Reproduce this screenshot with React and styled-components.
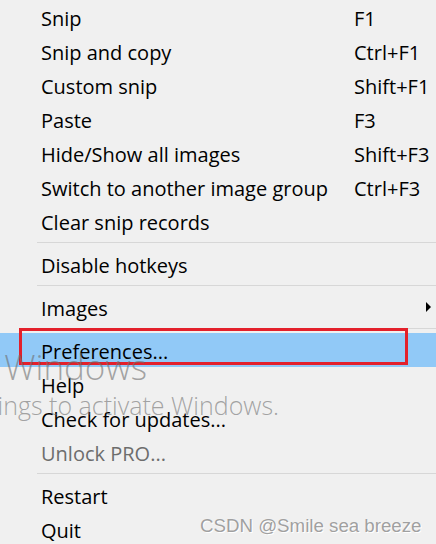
import React from "react";
import styled, { createGlobalStyle } from "styled-components";

const GlobalStyle = createGlobalStyle`
  html, body {
    margin: 0;
    padding: 0;
    background: #f0f0f0;
    overflow: hidden;
  }
`;

const Menu = styled.div`
  position: relative;
  width: 436px;
  height: 544px;
  overflow: hidden;
  background: #f0f0f0;
  font-family: "Open Sans", "Noto Sans", sans-serif;
  font-size: 20px;
  color: #000;
`;

const Item = styled.div`
  display: flex;
  align-items: center;
  height: 34px;
  padding: 2px 0 0 41px;
  box-sizing: border-box;
  background: ${(p) => (p.$active ? "#91c9f7" : "transparent")};
  color: ${(p) => (p.$disabled ? "#6d6d6d" : "#000")};
  white-space: nowrap;
`;

const Label = styled.span`
  width: 313px;
  flex: none;
`;

const Shortcut = styled.span`
  flex: 1;
`;

const SubArrow = styled.span`
  margin: -2px 5px 0 auto;
  width: 0;
  height: 0;
  border-top: 5px solid transparent;
  border-bottom: 5px solid transparent;
  border-left: 5px solid #000;
`;

const Separator = styled.div`
  height: 1px;
  margin: 4px 0 4px 37px;
  background: #d7d7d7;
`;

const Callout = styled.div`
  position: absolute;
  left: 19px;
  top: 328px;
  width: 389px;
  height: 37px;
  box-sizing: border-box;
  border: 3px solid #e3202b;
  pointer-events: none;
`;

const Watermark = styled.div`
  position: absolute;
  white-space: nowrap;
  font-family: "Open Sans", "Noto Sans", sans-serif;
  font-weight: 300;
  color: rgba(110, 110, 110, 0.6);
  right: ${(p) => p.$right}px;
  top: ${(p) => p.$top}px;
  font-size: ${(p) => p.$size}px;
  line-height: 1;
`;

const Credit = styled.div`
  position: absolute;
  left: 200px;
  top: 515px;
  font-family: "Liberation Sans", Arial, sans-serif;
  font-size: 18.7px;
  color: #a0a0a0;
  text-shadow: 0 0 1px #fff, 1px 1px 0 #fff;
  white-space: nowrap;
`;

const groups = [
  [
    { label: "Snip", key: "F1" },
    { label: "Snip and copy", key: "Ctrl+F1" },
    { label: "Custom snip", key: "Shift+F1" },
    { label: "Paste", key: "F3" },
    { label: "Hide/Show all images", key: "Shift+F3" },
    { label: "Switch to another image group", key: "Ctrl+F3" },
    { label: "Clear snip records" },
  ],
  [{ label: "Disable hotkeys" }],
  [{ label: "Images", sub: true }],
  [
    { label: "Preferences...", active: true },
    { label: "Help" },
    { label: "Check for updates..." },
    { label: "Unlock PRO...", disabled: true },
  ],
  [{ label: "Restart" }, { label: "Quit" }],
];

export default function App() {
  return (
    <>
      <GlobalStyle />
      <Menu>
        {groups.map((group, gi) => (
          <React.Fragment key={gi}>
            {gi > 0 && <Separator />}
            {group.map((it) => (
              <Item key={it.label} $active={it.active} $disabled={it.disabled}>
                <Label>{it.label}</Label>
                {it.key && <Shortcut>{it.key}</Shortcut>}
                {it.sub && <SubArrow />}
              </Item>
            ))}
          </React.Fragment>
        ))}
        <Callout />
        <Watermark $right={289} $top={349} $size={35}>
          Activate Windows
        </Watermark>
        <Watermark $right={157} $top={393} $size={25}>
          Go to Settings to activate Windows.
        </Watermark>
        <Credit>CSDN @Smile sea breeze</Credit>
      </Menu>
    </>
  );
}
